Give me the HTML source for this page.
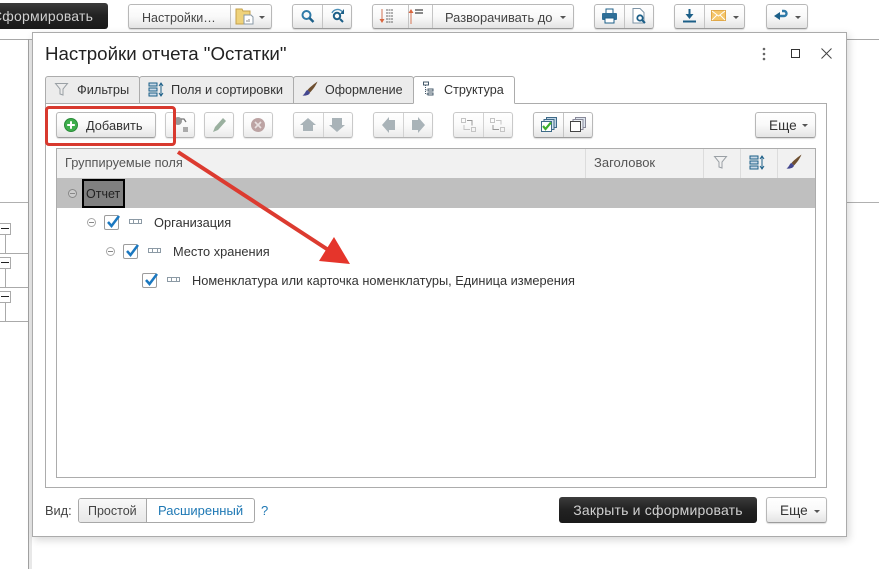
<!DOCTYPE html>
<html lang="ru"><head><meta charset="utf-8"><title>Настройки отчета</title>
<style>
*{box-sizing:border-box}
html,body{margin:0;padding:0;width:879px;height:569px;overflow:hidden;background:#fff}
body{position:relative;font-family:"Liberation Sans",sans-serif;font-size:12.8px;color:#333}
.a{position:absolute}
.b{position:absolute;border:1px solid #b8b8b8;border-bottom-color:#9c9c9c;border-radius:3px;background:linear-gradient(#fff,#f9f9f9 50%,#e4e4e4);box-shadow:0 1px 1px rgba(0,0,0,.14)}
.d{position:absolute;top:0;bottom:0;width:1px;background:#c4c4c4}
.t{position:absolute;white-space:nowrap;line-height:16px;margin-top:1px}
.dark{position:absolute;background:linear-gradient(#3c3c3c,#232323 45%,#1a1a1a);border-radius:3px;color:#d0d0d0;text-align:center;font-size:14px;letter-spacing:.2px}
.tab{position:absolute;top:76px;height:28px;background:#ececec;border:1px solid #acacac;border-radius:3px 3px 0 0}
.car{position:absolute;width:0;height:0;border-left:3.5px solid transparent;border-right:3.5px solid transparent;border-top:3.5px solid #555}
svg{position:absolute;overflow:visible}
.cb{position:absolute;width:15px;height:15px;border:1px solid #9c9c9c;border-radius:2px;background:#fff}
.mn{position:absolute;width:9px;height:9px;border:1px solid #a8a8a8;border-radius:50%}
.mn:after{content:"";position:absolute;left:1px;top:3px;width:5px;height:1px;background:#888}
.fld{position:absolute;width:13px;height:5px;border:1px solid #8c9aa5;background:linear-gradient(90deg,transparent 3px,#8c9aa5 3px,#8c9aa5 4px,transparent 4px,transparent 8px,#8c9aa5 8px,#8c9aa5 9px,transparent 9px)}
</style></head><body>

<!-- background -->
<div class="a" style="left:0;top:39px;width:879px;height:1px;background:#a8a8a8"></div>
<div class="a" style="left:0;top:202px;width:879px;height:1px;background:#b0b0b0"></div>
<div class="a" style="left:28px;top:39px;width:1px;height:530px;background:#a0a0a0"></div>
<div class="a" style="left:29px;top:40px;width:3px;height:529px;background:#e8e8e8"></div>
<div class="a" style="left:0;top:253px;width:28px;height:1px;background:#aaa"></div>
<div class="a" style="left:0;top:287px;width:28px;height:1px;background:#aaa"></div>
<div class="a" style="left:0;top:321px;width:28px;height:1px;background:#aaa"></div>
<div class="a" style="left:5px;top:234px;width:1px;height:20px;background:#aaa"></div>
<div class="a" style="left:5px;top:268px;width:1px;height:20px;background:#aaa"></div>
<div class="a" style="left:5px;top:302px;width:1px;height:20px;background:#aaa"></div>
<div class="a" style="left:-3px;top:223px;width:14px;height:12px;border:1px solid #aaa;background:#fff"></div>
<div class="a" style="left:-3px;top:257px;width:14px;height:12px;border:1px solid #aaa;background:#fff"></div>
<div class="a" style="left:-3px;top:291px;width:14px;height:12px;border:1px solid #aaa;background:#fff"></div>
<div class="a" style="left:1px;top:228px;width:8px;height:1px;background:#222"></div>
<div class="a" style="left:1px;top:262px;width:8px;height:1px;background:#222"></div>
<div class="a" style="left:1px;top:296px;width:8px;height:1px;background:#222"></div>

<!-- top toolbar -->
<div class="dark" style="left:-20px;top:3px;width:128px;height:26px"></div>
<div class="t" style="left:-8px;top:7px;font-size:14px;letter-spacing:.2px;color:#d0d0d0;margin:0;line-height:18px">Сформировать</div>

<div class="b" style="left:128px;top:4px;width:144px;height:25px">
  <div class="t" style="left:13px;top:4px;color:#444;font-size:12.5px">Настройки…</div><div class="d" style="left:101px"></div>
</div>
<svg style="left:236px;top:8px" width="18" height="17"><path d="M0 1h6l1 2h7v5H8v8H0z" fill="#efd27a" stroke="#c4a04a"/><path d="M8 7h7l2 2v7H8z" fill="#fff" stroke="#8a99a6"/><path d="M11 14v-2M13 14v-3" stroke="#888"/></svg>
<div class="car" style="left:259px;top:16px"></div>

<div class="b" style="left:292px;top:4px;width:60px;height:25px"><div class="d" style="left:29px"></div></div>
<svg style="left:300px;top:9px" width="16" height="15"><circle cx="6.5" cy="6" r="4" fill="none" stroke="#2f7aa8" stroke-width="2"/><path d="M9.5 9l4 4" stroke="#1c5f88" stroke-width="2.4"/></svg>
<svg style="left:330px;top:8px" width="16" height="16"><circle cx="7" cy="8" r="3.2" fill="none" stroke="#1c5f88" stroke-width="2"/><path d="M10 11l3 3" stroke="#1c5f88" stroke-width="2"/><path d="M2 5a6 6 0 0 1 10-1.500" fill="none" stroke="#4c90b8" stroke-width="1.400"/><path d="M14 1v5h-4z" fill="#1c5f88"/></svg>

<div class="b" style="left:372px;top:4px;width:202px;height:25px">
  <div class="d" style="left:35px"></div><div class="d" style="left:59px"></div>
  <div class="t" style="left:72px;top:4px;color:#444;font-size:12.9px">Разворачивать до</div>
</div>
<svg style="left:379px;top:8px" width="18" height="17"><path d="M3 1v12" stroke="#d98a70" stroke-width="1.200"/><path d="M0.500 11h5L3 15z" fill="#d9663f"/><path d="M7 2h7M7 5h7M7 8h7M7 11h7M7 14h7" stroke="#666" stroke-dasharray="2 .5"/></svg>
<svg style="left:407px;top:8px" width="18" height="17"><path d="M4 4v12" stroke="#d98a70" stroke-width="1.200"/><path d="M1.500 5h5L4 1z" fill="#d9663f"/><path d="M8 2h8M8 5h8" stroke="#444" stroke-width="1.200"/></svg>
<div class="car" style="left:560px;top:16px"></div>

<div class="b" style="left:594px;top:4px;width:60px;height:25px"><div class="d" style="left:29px"></div></div>
<svg style="left:601px;top:8px" width="17" height="16"><path d="M5 1h7v5H5z" fill="#fff" stroke="#1c5f88"/><rect x="1" y="5" width="15" height="7" rx="1" fill="#2f6f98"/><path d="M4 10h9v5H4z" fill="#fff" stroke="#1c5f88"/></svg>
<svg style="left:632px;top:8px" width="16" height="17"><path d="M1 .5h7l4 4V15H1z" fill="#fff" stroke="#7c93a5"/><circle cx="8" cy="10" r="2.700" fill="none" stroke="#1c5f88" stroke-width="1.800"/><path d="M10 12l3 3" stroke="#1c5f88" stroke-width="2"/></svg>

<div class="b" style="left:674px;top:4px;width:71px;height:25px"><div class="d" style="left:29px"></div></div>
<svg style="left:682px;top:8px" width="15" height="15"><path d="M7.500 1v7" stroke="#1c5f88" stroke-width="2"/><path d="M3.500 6h8l-4 5z" fill="#1c5f88"/><path d="M1 13.500h13" stroke="#1c5f88" stroke-width="2"/></svg>
<svg style="left:711px;top:10px" width="15" height="12"><rect x=".5" y=".5" width="14" height="10" fill="#f5c66a" stroke="#e0a848"/><path d="M1 1l6.500 5L14 1M1 10l5-5M14 10L9 5" fill="none" stroke="#fff" stroke-width=".9"/></svg>
<div class="car" style="left:733px;top:16px"></div>

<div class="b" style="left:766px;top:4px;width:42px;height:25px"></div>
<svg style="left:774px;top:8px" width="15" height="15"><path d="M5 7h5a2.500 2.500 0 0 0 0-5H8" fill="none" stroke="#2f7aa8" stroke-width="2.400" transform="translate(0 1)"/><path d="M6 4v8L0 8z" fill="#1c5f88"/></svg>
<div class="car" style="left:795px;top:16px"></div>

<!-- dialog -->
<div class="a" style="left:32px;top:32px;width:815px;height:505px;background:#fff;border:1px solid #ababab;box-shadow:2px 3px 8px rgba(0,0,0,.16)"></div>
<div class="t" style="left:45px;top:43px;font-size:18.7px;line-height:22px;color:#222;margin:0">Настройки отчета "Остатки"</div>
<svg style="left:761px;top:47px" width="6" height="14"><circle cx="3" cy="2" r="1.300" fill="#666"/><circle cx="3" cy="7" r="1.300" fill="#666"/><circle cx="3" cy="12" r="1.300" fill="#666"/></svg>
<div class="a" style="left:791px;top:49px;width:9px;height:9px;border:1px solid #333"></div>
<svg style="left:821px;top:48px" width="11" height="11"><path d="M.5.500l10 10M10.500.5L.5 10.500" stroke="#444"/></svg>

<!-- panel -->
<div class="a" style="left:45px;top:103px;width:782px;height:385px;border:1px solid #acacac;background:#fff"></div>
<div class="tab" style="left:45px;width:95px"></div>
<div class="tab" style="left:139px;width:155px"></div>
<div class="tab" style="left:293px;width:121px"></div>
<div class="tab" style="left:413px;width:102px;background:#fff;border-bottom-color:#fff"></div>
<svg style="left:55px;top:83px" width="13" height="13"><path d="M.5.500h12L8 6v6L5 11V6z" fill="none" stroke="#9aa0a5"/></svg>
<div class="t" style="left:77px;top:81px">Фильтры</div>
<svg style="left:148px;top:82px" width="16" height="15"><path d="M1 1h8v3H1zM1 6h8v3H1zM1 11h8v3H1z" fill="#c8d8e6" stroke="#1c5f88"/><path d="M13 1v13" stroke="#1c5f88"/><path d="M11 4l2-3 2 3M11 11l2 3 2-3" fill="none" stroke="#1c5f88"/></svg>
<div class="t" style="left:171px;top:81px">Поля и сортировки</div>
<svg style="left:302px;top:81px" width="16" height="16"><path d="M15.500.5c-3 2-8 6-10 8.500l2.500 2.500c2.500-2.500 6-7 7.500-11z" fill="#6e4f30"/><path d="M5.500 9c-2 .5-2 3.500-5 5.500 3.500.5 7-.5 7.500-3z" fill="#44478f"/></svg>
<div class="t" style="left:325px;top:81px;font-size:12.5px">Оформление</div>
<svg style="left:422px;top:81px" width="14" height="16"><path d="M1.500 1h5v3h-5zM6 8h5v2H6zM6 12h5v2H6z" fill="#fff" stroke="#44596a"/><path d="M3.500 4v9H6M3.500 9H6" fill="none" stroke="#44596a" stroke-dasharray="1 1"/></svg>
<div class="t" style="left:444px;top:81px;font-size:12.6px">Структура</div>

<!-- inner toolbar -->
<div class="b" style="left:56px;top:112px;width:100px;height:26px"><div class="t" style="left:29px;top:4px">Добавить</div></div>
<svg style="left:64px;top:118px" width="14" height="14"><circle cx="7" cy="7" r="6.500" fill="#3eae4c" stroke="#2a8a38"/><path d="M7 3.200v7.600M3.200 7h7.600" stroke="#fff" stroke-width="2"/></svg>

<div class="b" style="left:165px;top:112px;width:30px;height:26px;opacity:.75"></div>
<svg style="left:172px;top:116px" width="18" height="18"><circle cx="6" cy="5" r="4" fill="#999"/><path d="M9 3h3l2 3" stroke="#777" fill="none" stroke-width="1.300"/><rect x="11" y="11" width="5" height="5" fill="#aaa"/></svg>
<div class="b" style="left:204px;top:112px;width:30px;height:26px;opacity:.75"></div>
<svg style="left:212px;top:117px" width="15" height="16"><path d="M11 1l3 3-8 9-5 2 2-5z" fill="#9ab09f"/></svg>
<div class="b" style="left:243px;top:112px;width:30px;height:26px;opacity:.75"></div>
<svg style="left:251px;top:118px" width="14" height="14"><circle cx="7" cy="7" r="7" fill="#bca3a3"/><path d="M4 4l6 6M10 4l-6 6" stroke="#e8e0e0" stroke-width="1.600"/></svg>

<div class="b" style="left:293px;top:112px;width:60px;height:26px;opacity:.75"><div class="d" style="left:29px"></div></div>
<svg style="left:300px;top:118px" width="16" height="14"><path d="M8 0l8 7h-3v6H3V7H0z" fill="#a9b3b8"/></svg>
<svg style="left:329px;top:118px" width="16" height="14"><path d="M8 14L0 7h3V0h10v7h3z" fill="#a9b3b8"/></svg>
<div class="b" style="left:373px;top:112px;width:60px;height:26px;opacity:.75"><div class="d" style="left:29px"></div></div>
<svg style="left:382px;top:117px" width="14" height="16"><path d="M0 8l7-8v3h6v10H7v3z" fill="#a9b3b8"/></svg>
<svg style="left:411px;top:117px" width="14" height="16"><path d="M14 8L7 0v3H1v10h6v3z" fill="#a9b3b8"/></svg>
<div class="b" style="left:453px;top:112px;width:60px;height:26px;opacity:.75"><div class="d" style="left:29px"></div></div>
<svg style="left:460px;top:117px" width="17" height="16"><path d="M1.500 1.500h4v4h-4zM11.500 10.500h4v4h-4z" fill="none" stroke="#c4c4c4"/><path d="M7 3.500h5v5" fill="none" stroke="#999"/><path d="M4 8v4.500h6" fill="none" stroke="#c4c4c4"/></svg>
<svg style="left:489px;top:117px" width="17" height="16"><path d="M1.500 1.500h4v4h-4zM11.500 10.500h4v4h-4z" fill="none" stroke="#c4c4c4"/><path d="M7 3.500h5v4" fill="none" stroke="#c4c4c4"/><path d="M4 8v4.500h6" fill="none" stroke="#999"/></svg>

<div class="b" style="left:533px;top:112px;width:60px;height:26px"><div class="d" style="left:29px"></div></div>
<svg style="left:541px;top:117px" width="16" height="15"><rect x="5.500" y=".5" width="10" height="10" fill="#bfd4e6" stroke="#3e6a88"/><rect x="3" y="2.500" width="10" height="10" fill="#d4e2ee" stroke="#3e6a88"/><rect x=".5" y="4.500" width="10" height="10" fill="#fff" stroke="#3e6a88"/><path d="M2 9l2.500 3L10 5.500" fill="none" stroke="#3eae2c" stroke-width="2.200"/></svg>
<svg style="left:570px;top:117px" width="16" height="15"><rect x="5.500" y=".5" width="10" height="10" fill="#dde6ee" stroke="#889"/><rect x="3" y="2.500" width="10" height="10" fill="#eef2f6" stroke="#889"/><rect x=".5" y="4.500" width="10" height="10" fill="#fff" stroke="#444"/></svg>
<div class="b" style="left:755px;top:112px;width:61px;height:26px"><div class="t" style="left:13px;top:4px;font-size:13.6px">Еще</div></div>
<div class="car" style="left:802px;top:124px"></div>

<!-- table -->
<div class="a" style="left:56px;top:148px;width:760px;height:330px;border:1px solid #acacac;background:#fff"></div>
<div class="a" style="left:57px;top:149px;width:758px;height:29px;background:#f1f1f1"></div>
<div class="a" style="left:585px;top:149px;width:1px;height:29px;background:#dcdcdc"></div>
<div class="a" style="left:703px;top:149px;width:1px;height:29px;background:#dcdcdc"></div>
<div class="a" style="left:740px;top:149px;width:1px;height:29px;background:#dcdcdc"></div>
<div class="a" style="left:777px;top:149px;width:1px;height:29px;background:#dcdcdc"></div>
<div class="t" style="left:65px;top:154px;color:#555">Группируемые поля</div>
<div class="t" style="left:594px;top:154px;color:#555;font-size:13px">Заголовок</div>
<svg style="left:714px;top:156px" width="13" height="13"><path d="M.5.500h12L8 6v6L5 11V6z" fill="none" stroke="#9aa0a5"/></svg>
<svg style="left:749px;top:155px" width="16" height="15"><path d="M1 1h8v3H1zM1 6h8v3H1zM1 11h8v3H1z" fill="#c8d8e6" stroke="#1c5f88"/><path d="M13 1v13" stroke="#1c5f88"/><path d="M11 4l2-3 2 3M11 11l2 3 2-3" fill="none" stroke="#1c5f88"/></svg>
<svg style="left:786px;top:154px" width="16" height="16"><path d="M15.500.5c-3 2-8 6-10 8.500l2.500 2.500c2.500-2.500 6-7 7.500-11z" fill="#6e4f30"/><path d="M5.500 9c-2 .5-2 3.500-5 5.500 3.500.5 7-.5 7.500-3z" fill="#44478f"/></svg>

<div class="a" style="left:57px;top:178px;width:758px;height:30px;background:#bfbfbf"></div>
<div class="a" style="left:82px;top:179px;width:43px;height:29px;background:#808080;border:2px solid #000"></div>
<div class="t" style="left:86px;top:185px;color:#222;font-size:12.5px">Отчет</div>
<div class="mn" style="left:68px;top:189px;background:#ccc;border-color:#888"></div>

<div class="mn" style="left:87px;top:218px"></div>
<div class="cb" style="left:104px;top:215px"></div>
<svg style="left:106px;top:214px" width="15" height="14"><path d="M2 8l3.500 4L13 2" fill="none" stroke="#1b78c0" stroke-width="2.500"/></svg>
<div class="fld" style="left:129px;top:219px"></div>
<div class="t" style="left:154px;top:214px">Организация</div>

<div class="mn" style="left:106px;top:247px"></div>
<div class="cb" style="left:123px;top:244px"></div>
<svg style="left:125px;top:243px" width="15" height="14"><path d="M2 8l3.500 4L13 2" fill="none" stroke="#1b78c0" stroke-width="2.500"/></svg>
<div class="fld" style="left:148px;top:248px"></div>
<div class="t" style="left:173px;top:243px">Место хранения</div>

<div class="cb" style="left:142px;top:273px"></div>
<svg style="left:144px;top:272px" width="15" height="14"><path d="M2 8l3.500 4L13 2" fill="none" stroke="#1b78c0" stroke-width="2.500"/></svg>
<div class="fld" style="left:167px;top:277px"></div>
<div class="t" style="left:192px;top:272px">Номенклатура или карточка номенклатуры, Единица измерения</div>

<!-- footer -->
<div class="t" style="left:45px;top:502px;color:#444">Вид:</div>
<div class="a" style="left:78px;top:498px;width:177px;height:25px;border:1px solid #a8a8a8;border-radius:3px;background:#fff;overflow:hidden">
  <div class="a" style="left:0;top:0;width:68px;height:23px;background:linear-gradient(#f8f8f8,#e8e8e8);border-right:1px solid #a8a8a8"></div>
  <div class="t" style="left:9px;top:3px;color:#444;font-size:12.5px">Простой</div>
  <div class="t" style="left:79px;top:3px;color:#1e78b4;font-size:13px">Расширенный</div>
</div>
<div class="t" style="left:261px;top:502px;color:#1e78b4;font-size:13px">?</div>
<div class="dark" style="left:559px;top:497px;width:198px;height:26px;line-height:26px">Закрыть и сформировать</div>
<div class="b" style="left:766px;top:497px;width:61px;height:26px"><div class="t" style="left:13px;top:4px;font-size:13.6px">Еще</div></div>
<div class="car" style="left:814px;top:510px"></div>

<!-- annotation -->
<div class="a" style="left:45px;top:106px;width:131px;height:40px;border:3px solid #d8392e;border-radius:4px"></div>
<svg style="left:0;top:0" width="879" height="569"><path d="M178 152L333 253" stroke="#dc3b30" stroke-width="4"/><path d="M334 237L350 264 319 261z" fill="#e5352b"/></svg>
</body></html>
